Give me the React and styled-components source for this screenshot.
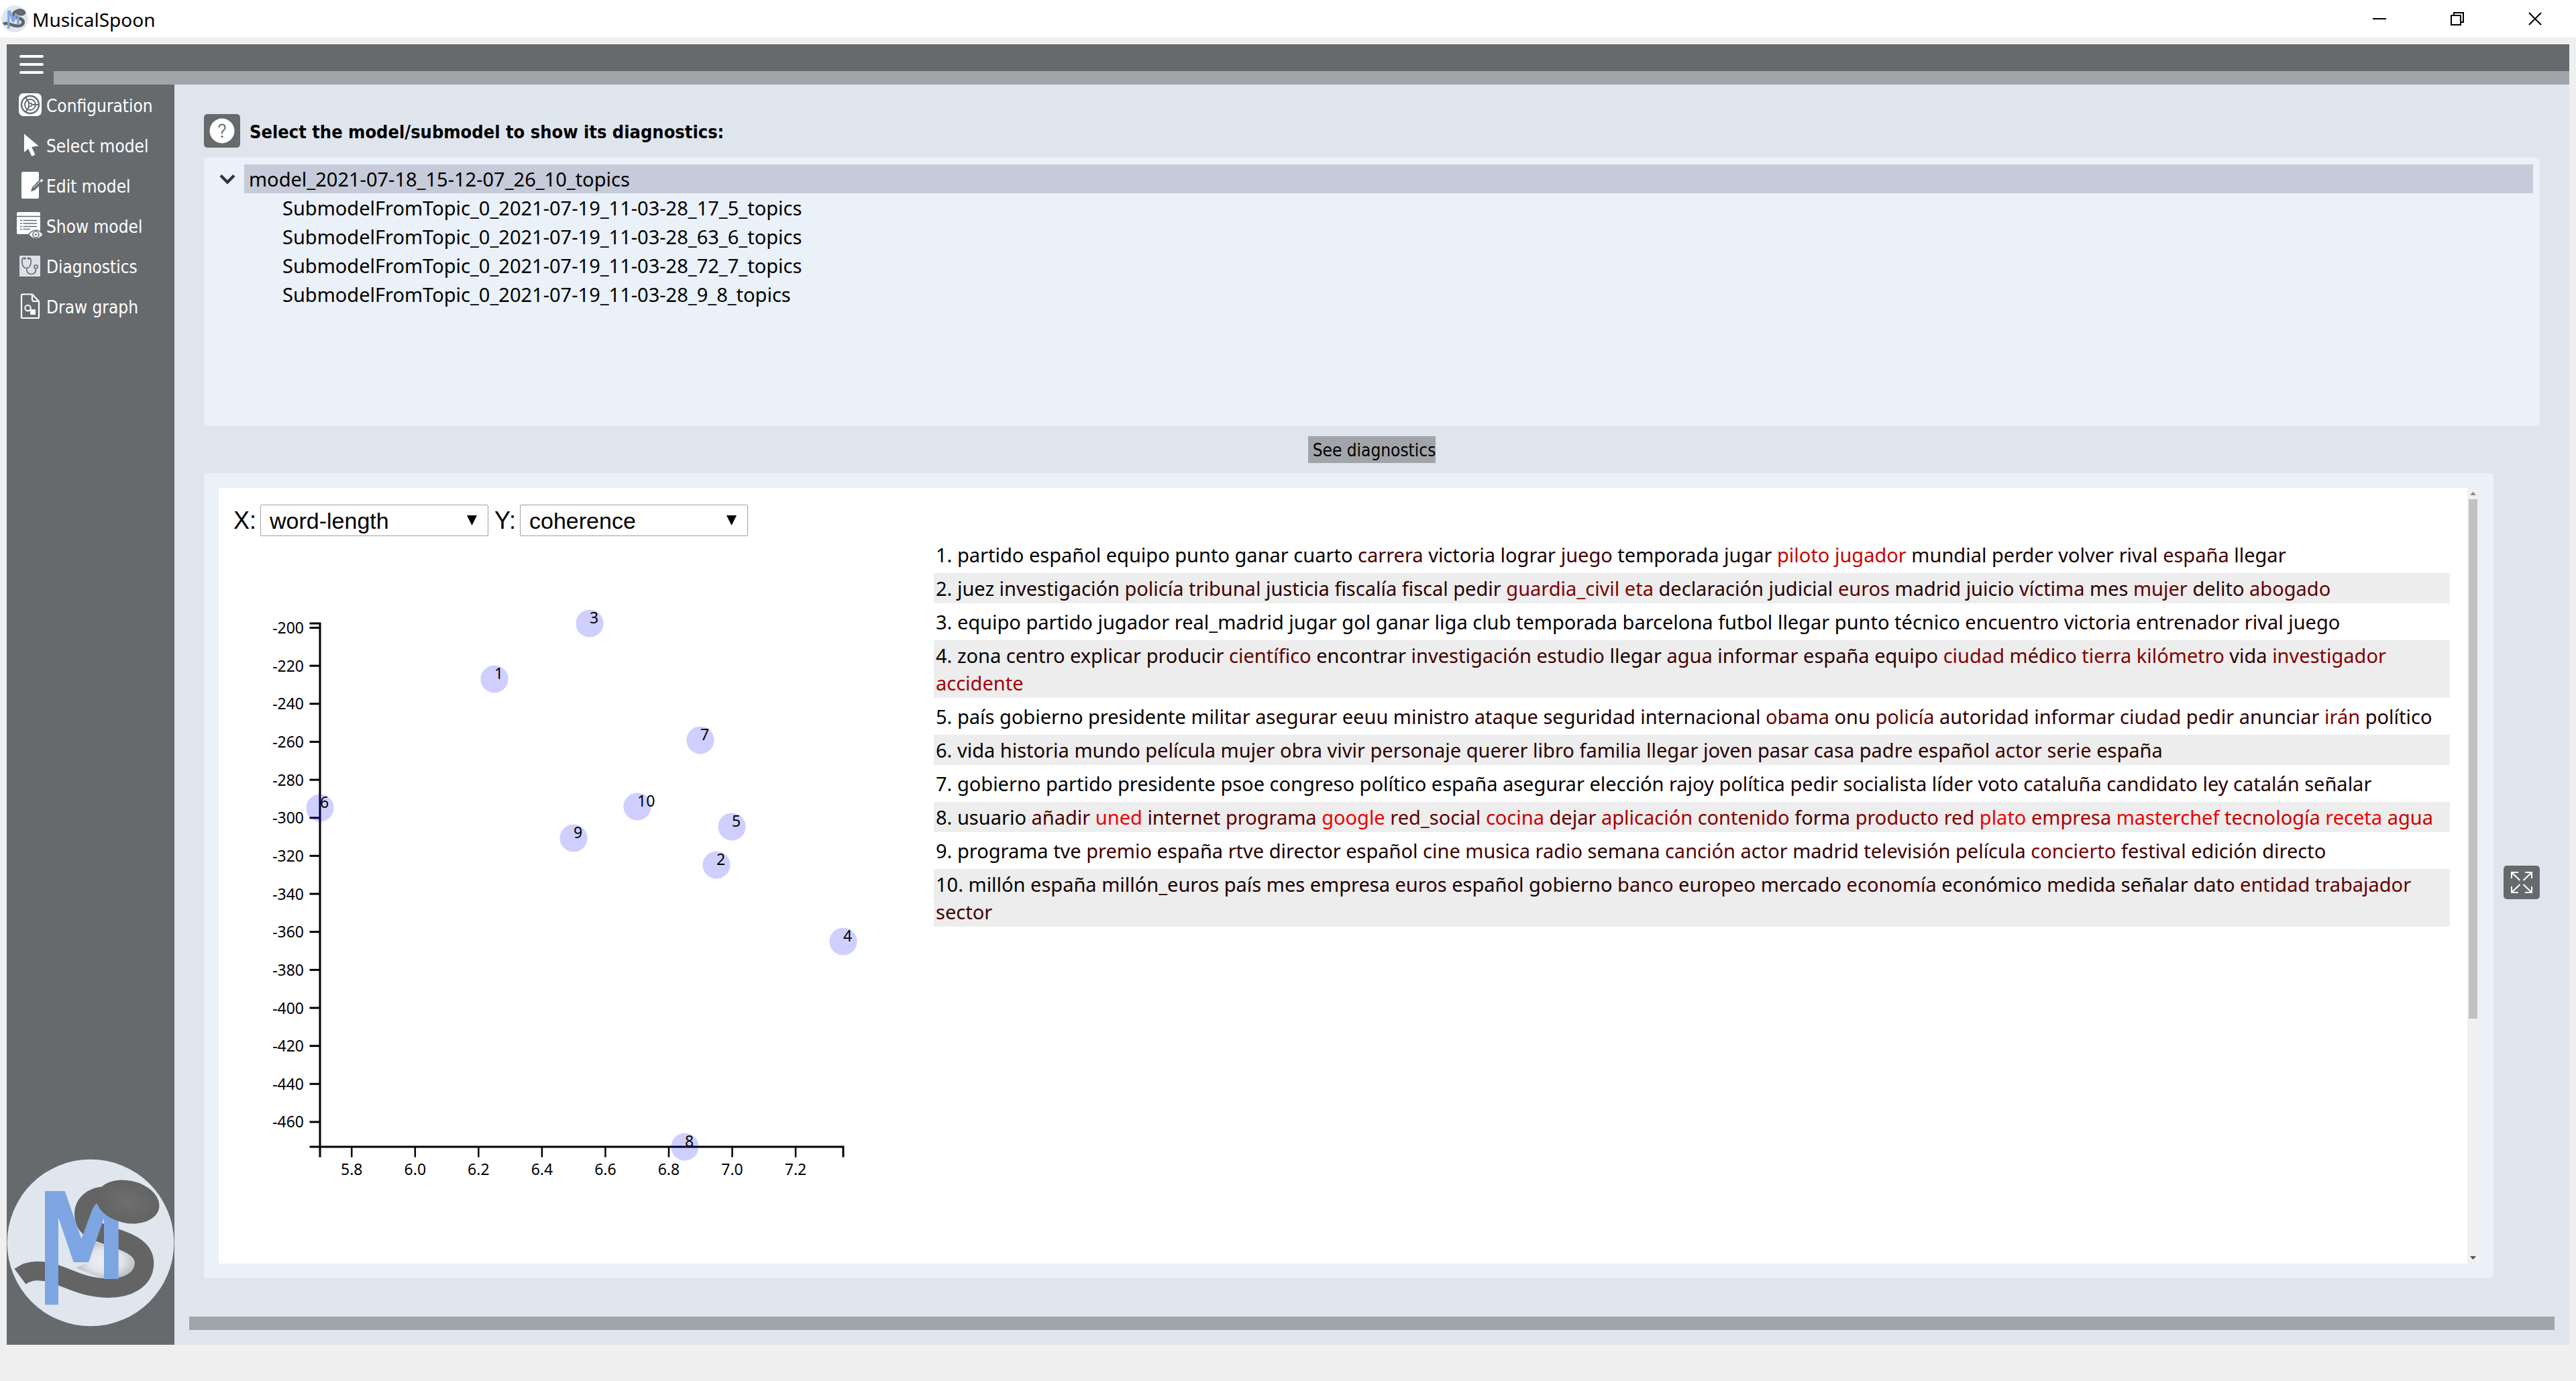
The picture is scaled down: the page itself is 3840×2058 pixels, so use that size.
import React from "react";
import styled, { createGlobalStyle } from "styled-components";

const color = {
  window: "#efefef",
  dark: "#666a6d",
  mid: "#a1a5aa",
  main: "#dfe5ed",
  panel: "#eaf1f9",
  selected: "#c6cbd9",
  row: "#ededed",
};

const uiFont = '"DejaVu Sans Condensed", "Noto Sans", sans-serif';
const textFont = '"Noto Sans", "Open Sans", sans-serif';
const formFont = '"Liberation Sans", Arial, sans-serif';

const GlobalStyle = createGlobalStyle`
  *, *::before, *::after { box-sizing: border-box; }
  body {
    margin: 0;
    background: ${color.window};
    color: #000;
    font-family: ${textFont};
  }
  button, select { margin: 0; padding: 0; border: 0; border-radius: 0; color: inherit; }
  ul, ol { margin: 0; padding: 0; list-style: none; }
  svg { display: block; flex: none; }
`;

const Page = styled.div`
  display: flex;
  flex-direction: column;
  min-height: 100vh;
`;

/* ---------- window title bar ---------- */

const TitleBar = styled.header`
  display: flex;
  align-items: center;
  gap: 6px;
  height: 56px;
  padding: 0 3px 0 2px;
  background: #fff;
`;

const Title = styled.h1`
  flex: 1;
  margin: 0;
  padding-top: 2px;
  font-size: 28px;
  font-weight: 400;
  line-height: 40px;
`;

const ControlGroup = styled.div`
  display: flex;
`;

const WindowButton = styled.button`
  display: flex;
  align-items: center;
  justify-content: center;
  width: 116px;
  height: 54px;
  background: transparent;
`;

/* ---------- frame ---------- */

const Frame = styled.div`
  flex: 1;
  display: flex;
  flex-direction: column;
  padding: 10px 10px 54px;
`;

const TopBar = styled.div`
  display: flex;
  height: 60px;
  background: ${color.dark};
`;

const MenuButton = styled.button`
  display: flex;
  flex-direction: column;
  justify-content: center;
  gap: 8px;
  width: 70px;
  padding: 0 15px 0 19px;
  background: transparent;
`;

const MenuLine = styled.span`
  height: 4px;
  border-radius: 2px;
  background: #fff;
`;

const TopStrip = styled.div`
  flex: 1;
  align-self: flex-end;
  height: 20px;
  background: ${color.mid};
`;

const Body = styled.div`
  flex: 1;
  display: flex;
`;

const Sidebar = styled.nav`
  display: flex;
  flex-direction: column;
  justify-content: space-between;
  width: 250px;
  padding-bottom: 27px;
  background: ${color.dark};
`;

const NavButton = styled.button`
  display: flex;
  align-items: center;
  gap: 4px;
  width: 100%;
  height: 60px;
  padding-left: 15px;
  background: transparent;
  color: #fff;
  font-family: ${uiFont};
  font-size: 26px;
  text-align: left;
`;

const NavLabel = styled.span`
  padding-top: 4px;
`;

const Main = styled.main`
  flex: 1;
  display: flex;
  flex-direction: column;
  min-width: 0;
  padding: 44px 22px 22px;
  background: ${color.main};
`;

const Content = styled.div`
  flex: 1;
  display: flex;
  flex-direction: column;
  gap: 15px;
  padding: 0 22px 57px;
`;

const BottomStrip = styled.div`
  height: 20px;
  background: ${color.mid};
`;

/* ---------- model selection ---------- */

const Prompt = styled.div`
  display: flex;
  align-items: center;
  gap: 14px;
`;

const IconButton = styled.button`
  flex: none;
  display: flex;
  align-items: center;
  justify-content: center;
  width: 54px;
  height: 50px;
  border-radius: 5px;
  background: ${color.dark};
`;

const PromptText = styled.h2`
  margin: 0;
  padding-top: 2px;
  font-family: ${uiFont};
  font-size: 27px;
  font-weight: 700;
`;

const Tree = styled.ul`
  height: 400px;
  padding: 10px;
  border-radius: 4px;
  background: ${color.panel};
`;

const TreeRow = styled.div`
  display: flex;
  height: 43px;
`;

const Toggle = styled.button`
  display: flex;
  align-items: center;
  justify-content: center;
  width: 50px;
  background: transparent;
`;

const TreeLabel = styled.span`
  flex: 1;
  margin-left: ${(p) => (p.$child ? "100px" : "0")};
  padding-left: 7px;
  background: ${(p) => (p.$selected ? color.selected : "transparent")};
  font-size: 29px;
  line-height: 43px;
`;

const ActionButton = styled.button`
  align-self: center;
  height: 40px;
  padding: 2px 0 0 7px;
  background: ${color.mid};
  font-family: ${uiFont};
  font-size: 26px;
`;

/* ---------- diagnostics ---------- */

const Results = styled.div`
  flex: 1;
  display: flex;
  align-items: center;
  gap: 15px;
`;

const Panel = styled.section`
  flex: 1;
  align-self: stretch;
  display: flex;
  min-width: 0;
  padding: 22px;
  border-radius: 5px;
  background: ${color.panel};
`;

const View = styled.div`
  flex: 1;
  display: flex;
  flex-direction: column;
  gap: 5px;
  min-width: 0;
  padding: 25px 26px 0 22px;
  background: #fff;
`;

const Controls = styled.div`
  display: flex;
  gap: 9px;
  font-family: ${formFont};
  font-size: 36px;
`;

const Field = styled.div`
  display: flex;
  align-items: center;
  gap: 6px;
`;

const SelectBox = styled.div`
  display: grid;
  align-items: center;
  width: 340px;

  > * { grid-area: 1 / 1; }
  > svg { justify-self: end; margin-right: 17px; pointer-events: none; }
`;

const Select = styled.select`
  appearance: none;
  width: 100%;
  height: 47px;
  padding-left: 13px;
  border: 1px solid #a0a0a0;
  border-radius: 2px;
  background: #fff;
  font-family: ${formFont};
  font-size: 34px;
`;

const Split = styled.div`
  display: flex;
  align-items: flex-start;
`;

const Chart = styled.svg`
  font-family: ${textFont};
  font-size: 23px;
`;

const Topics = styled.ol`
  flex: 1;
  display: flex;
  flex-direction: column;
  gap: 5px;
  min-width: 0;
`;

const Topic = styled.li`
  padding: 2px 3px;
  background: ${(p) => (p.$shaded ? color.row : "transparent")};
  font-size: 29px;
  line-height: 41px;
`;

const shades = ["#000", "#180000", "#2c0000", "#440000", "#600000", "#800000", "#a40000", "#c80000", "#ec0000"];

const Word = styled.span`
  color: ${(p) => shades[p.$level]};
`;

const ScrollTrack = styled.div`
  display: flex;
  flex-direction: column;
  align-items: center;
  width: 17px;
  background: #f0f0f0;
`;

const ScrollArrow = styled.span`
  display: flex;
  align-items: center;
  justify-content: center;
  width: 17px;
  height: 17px;
`;

const ScrollRail = styled.div`
  flex: 1;
  width: 13px;
`;

const ScrollThumb = styled.div`
  height: 69%;
  background: #c1c1c1;
`;

const Expand = styled(IconButton)`
  margin-top: 20px;
`;

/* ---------- drawings ---------- */

function Logo({ size, id }) {
  return (
    <svg width={size} height={size} viewBox="30 83 750 750" role="img" aria-label="MusicalSpoon logo">
      <defs>
        <radialGradient id={`${id}-bowl`}>
          <stop offset="0" stopColor="#6e6e6e" />
          <stop offset="1" stopColor="#636363" />
        </radialGradient>
        <radialGradient id={`${id}-glow`}>
          <stop offset="0" stopColor="#eceff3" />
          <stop offset="0.6" stopColor="#e2e5ea" />
          <stop offset="1" stopColor="#bfc2c6" />
        </radialGradient>
      </defs>
      <circle cx="405" cy="458" r="373" fill="#e0e6ee" />
      <path d="M425 455 C520 490 605 500 600 560 C590 620 500 625 450 615 L340 570 Q420 540 425 455Z" fill={`url(#${id}-glow)`} />
      <path
        d="M480 250 C410 246 376 290 376 330 C378 405 440 405 505 434 C600 462 646 496 645 552 C642 625 570 661 485 661 C345 661 270 584 170 584 Q125 583 90 609"
        fill="none"
        stroke="#646464"
        strokeWidth="86"
      />
      <rect x="201" y="227" width="60" height="508" fill="#7da5e2" />
      <rect x="465" y="320" width="65" height="300" fill="#7da5e2" />
      <polygon points="230,227 290,227 364,440 414,306 430,282 470,320 466,345 396,545 329,545 261,345" fill="#7da5e2" />
      <ellipse cx="571" cy="275" rx="143" ry="95" transform="rotate(12 571 275)" fill={`url(#${id}-bowl)`} />
    </svg>
  );
}

const icons = {
  configuration: (
    <>
      <rect x="3" y="3" width="34" height="34" rx="7" fill="#fff" />
      <g fill="none" stroke={color.dark}>
        <circle cx="20" cy="20" r="13" strokeWidth="2.4" />
        <circle cx="20" cy="20" r="8" strokeWidth="2" />
        <circle cx="20" cy="20" r="2.4" strokeWidth="1.6" fill="#fff" />
        <path d="M22.5 20H33M18.6 17.8L13.5 9M18.6 22.2L13.5 31" strokeWidth="2" />
      </g>
    </>
  ),
  select: <path d="M11 3.500V31l6-5.500 5.500 11.500 5-2.500-5.500-11.500 10.500-1.500z" fill="#fff" />,
  edit: (
    <>
      <rect x="7" y="0" width="26" height="40" rx="2" fill="#fff" />
      <path d="M22 28.500l1.500-5L35.500 11q2-1.500 3.500 0t0 3.500L26.500 27z" fill="#fff" stroke={color.dark} strokeWidth="1.4" />
      <path d="M22.500 28l1-4.500L34 13l3 3L26.500 26.500z" fill={color.dark} />
      <path d="M25 24L34.500 14.500" stroke="#fff" strokeWidth="1" />
    </>
  ),
  show: (
    <>
      <rect x="0" y="0" width="35" height="33" rx="2" fill="#fff" />
      <g stroke={color.dark} strokeWidth="1.6">
        <path d="M0 6.500H35" />
        <path d="M9.500 12.500H30M9.500 17H30M9.500 21.500H30M9.500 25.500H20" />
        <path d="M5 12.500H8M5 17H8M5 21.500H8M5 25.500H8" />
      </g>
      <path d="M17.500 33.500Q28.500 20.500 39.500 33.500Q28.500 46.500 17.500 33.500Z" fill="#fff" stroke={color.dark} strokeWidth="1.6" />
      <circle cx="28.500" cy="33.500" r="4.500" fill="none" stroke={color.dark} strokeWidth="1.6" />
      <circle cx="28.500" cy="33.500" r="1.600" fill={color.dark} />
    </>
  ),
  diagnostics: (
    <>
      <rect x="4" y="5" width="31" height="31" fill="#dcdfe4" />
      <g fill="none" stroke={color.dark} strokeWidth="1.6">
        <path d="M11.500 9H9Q8 9 8 11V16Q9 23.500 14.500 23.500T21 16V11Q21 9 20 9H17.500" />
        <path d="M14.500 23.500Q14.500 32.500 22 32.500Q29 32 28.500 24" />
        <circle cx="28.500" cy="21.500" r="2.500" />
      </g>
      <rect x="10" y="7.500" width="3.500" height="3" fill={color.dark} />
      <rect x="16" y="7.500" width="3.500" height="3" fill={color.dark} />
    </>
  ),
  draw: (
    <>
      <path d="M9 2.500H23L33 13V36.500Q33 38 31.500 38H8.500Q7 38 7 36.500V4Q7 2.500 9 2.500Z" fill="none" stroke="#fff" strokeWidth="2.2" />
      <path d="M23 2.500V10Q23 13 25.500 13H33" fill="none" stroke="#fff" strokeWidth="2.2" />
      <circle cx="16.500" cy="23" r="4.200" fill="none" stroke="#fff" strokeWidth="2" />
      <rect x="20" y="25" width="8" height="8" rx="1" fill="#fff" />
    </>
  ),
};

function WindowControls() {
  return (
    <ControlGroup>
      <WindowButton type="button" aria-label="Minimize">
        <svg width="20" height="20" viewBox="0 0 20 20" fill="none" stroke="#000" strokeWidth="2"><path d="M0 10H20" /></svg>
      </WindowButton>
      <WindowButton type="button" aria-label="Restore">
        <svg width="20" height="20" viewBox="0 0 20 20" fill="none" stroke="#000" strokeWidth="2"><path d="M1 5H15V19H1ZM5 5V1H19V15H15" /></svg>
      </WindowButton>
      <WindowButton type="button" aria-label="Close">
        <svg width="20" height="20" viewBox="0 0 20 20" fill="none" stroke="#000" strokeWidth="2"><path d="M1 1L19 19M19 1L1 19" /></svg>
      </WindowButton>
    </ControlGroup>
  );
}

function NavItem({ icon, children }) {
  return (
    <li>
      <NavButton type="button">
        <svg width="40" height="40" viewBox="0 0 40 40" aria-hidden="true">{icons[icon]}</svg>
        <NavLabel>{children}</NavLabel>
      </NavButton>
    </li>
  );
}

const submodels = [
  "SubmodelFromTopic_0_2021-07-19_11-03-28_17_5_topics",
  "SubmodelFromTopic_0_2021-07-19_11-03-28_63_6_topics",
  "SubmodelFromTopic_0_2021-07-19_11-03-28_72_7_topics",
  "SubmodelFromTopic_0_2021-07-19_11-03-28_9_8_topics",
];

/* each word may carry a redness level after an asterisk */
const topics = [
  "partido español equipo punto ganar cuarto carrera*3 victoria*1 lograr*1 juego*3 temporada jugar*1 piloto*7 jugador*7 mundial*1 perder*1 volver*1 rival*1 españa*3 llegar*1",
  "juez investigación*1 policía*3 tribunal*3 justicia*2 fiscalía*2 fiscal*2 pedir*2 guardia_civil*5 eta*5 declaración*2 judicial*2 euros*4 madrid*2 juicio*2 víctima*3 mes*2 mujer*4 delito*2 abogado*4",
  "equipo partido jugador real_madrid jugar gol ganar liga club temporada barcelona futbol llegar punto técnico encuentro*1 victoria*1 entrenador*1 rival*1 juego*1",
  "zona centro*1 explicar*1 producir*1 científico*4 encontrar*1 investigación*3 estudio*3 llegar*1 agua*3 informar*2 españa*2 equipo*2 ciudad*5 médico*4 tierra*5 kilómetro*5 vida*2 investigador*5 accidente*6",
  "país gobierno presidente militar*1 asegurar*1 eeuu*1 ministro*1 ataque*2 seguridad*1 internacional*1 obama*4 onu*2 policía*4 autoridad*2 informar*2 ciudad*3 pedir*2 anunciar*2 irán*5 político*1",
  "vida historia*1 mundo*1 película*2 mujer*2 obra*2 vivir*2 personaje*2 querer*2 libro*2 familia*2 llegar*2 joven*2 pasar*2 casa*2 padre*2 español*2 actor*3 serie*3 españa*2",
  "gobierno partido presidente psoe congreso político españa asegurar elección rajoy*1 política*1 pedir*1 socialista*1 líder*1 voto*1 cataluña*2 candidato*2 ley*2 catalán*2 señalar*1",
  "usuario añadir*3 uned*8 internet*3 programa*4 google*8 red_social*4 cocina*7 dejar*4 aplicación*6 contenido*5 forma*3 producto*5 red*5 plato*8 empresa*6 masterchef*8 tecnología*7 receta*8 agua*7",
  "programa tve*1 premio*3 españa*1 rtve*2 director*1 español*1 cine*3 musica*3 radio*3 semana*2 canción*4 actor*3 madrid*2 televisión*3 película*3 concierto*5 festival*3 edición*2 directo*2",
  "millón españa*1 millón_euros*1 país*1 mes*1 empresa*1 euros*2 español*1 gobierno*1 banco*3 europeo*2 mercado*2 economía*3 económico*1 medida*2 señalar*1 dato*2 entidad*4 trabajador*4 sector*3",
].map((line) =>
  line.split(" ").map((entry) => {
    const [text, level = 0] = entry.split("*");
    return { text, level: Number(level) };
  })
);

const points = [
  { id: 1, x: 389, y: 208 },
  { id: 2, x: 720, y: 485 },
  { id: 3, x: 531, y: 125 },
  { id: 4, x: 909, y: 599 },
  { id: 5, x: 743, y: 428 },
  { id: 6, x: 129, y: 400 },
  { id: 7, x: 696, y: 299 },
  { id: 8, x: 673, y: 905 },
  { id: 9, x: 507, y: 445 },
  { id: 10, x: 602, y: 398 },
];

const yTicks = Array.from({ length: 14 }, (_, i) => -200 - i * 20);
const xTicks = [5.8, 6, 6.2, 6.4, 6.6, 6.8, 7, 7.2];
const scaleX = (v) => 129 + (v - 5.7) * 472.7;
const scaleY = (v) => 131.5 + (-200 - v) * 2.8325;

function ScatterPlot() {
  return (
    <Chart width="1044" height="1000" viewBox="0 0 1044 1000" role="img" aria-label="Topics by word-length and coherence">
      <g fill="none" stroke="#000" strokeWidth="3">
        <path d="M113.500 125H129V905H113.500" />
        <path d="M129 920.500V905H909V920.500" />
        {yTicks.map((v) => <path key={v} d={`M113.500 ${scaleY(v)}H129`} />)}
        {xTicks.map((v) => <path key={v} d={`M${scaleX(v)} 905V920.500`} strokeWidth="2.5" />)}
      </g>
      {yTicks.map((v) => <text key={v} x="105" y={scaleY(v) + 8.5} textAnchor="end">{v}</text>)}
      {xTicks.map((v) => <text key={v} x={scaleX(v)} y="947" textAnchor="middle">{v.toFixed(1)}</text>)}
      {points.map((p) => (
        <g key={p.id}>
          <circle cx={p.x} cy={p.y} r="20.600" fill="#00f" fillOpacity="0.19" />
          <text x={p.x} y={p.y}>{p.id}</text>
        </g>
      ))}
    </Chart>
  );
}

function AxisSelect({ id, label, value }) {
  return (
    <Field>
      <label htmlFor={id}>{label}</label>
      <SelectBox>
        <Select id={id} defaultValue={value}>
          <option value={value}>{value}</option>
        </Select>
        <svg width="15" height="15" viewBox="0 0 15 15" aria-hidden="true"><path d="M0 0H15L7.500 15z" /></svg>
      </SelectBox>
    </Field>
  );
}

export default function App() {
  return (
    <Page>
      <GlobalStyle />
      <TitleBar>
        <Logo size={40} id="small" />
        <Title>MusicalSpoon</Title>
        <WindowControls />
      </TitleBar>
      <Frame>
        <TopBar>
          <MenuButton type="button" aria-label="Menu"><MenuLine /><MenuLine /><MenuLine /></MenuButton>
          <TopStrip />
        </TopBar>
        <Body>
          <Sidebar>
            <ul>
              <NavItem icon="configuration">Configuration</NavItem>
              <NavItem icon="select">Select model</NavItem>
              <NavItem icon="edit">Edit model</NavItem>
              <NavItem icon="show">Show model</NavItem>
              <NavItem icon="diagnostics">Diagnostics</NavItem>
              <NavItem icon="draw">Draw graph</NavItem>
            </ul>
            <Logo size={250} id="large" />
          </Sidebar>
          <Main>
            <Content>
              <Prompt>
                <IconButton type="button" aria-label="Help">
                  <svg width="38" height="38" viewBox="0 0 38 38" aria-hidden="true">
                    <circle cx="19" cy="19" r="18.500" fill="#fff" />
                    <path d="M14.500 14Q14.500 9.500 19 9.500T23.500 14Q23.500 16.500 21 18.500T19 23.500" fill="none" stroke={color.dark} strokeWidth="2" />
                    <circle cx="19" cy="27.500" r="1.600" fill={color.dark} />
                  </svg>
                </IconButton>
                <PromptText>Select the model/submodel to show its diagnostics:</PromptText>
              </Prompt>
              <Tree>
                <li>
                  <TreeRow>
                    <Toggle type="button" aria-label="Collapse">
                      <svg width="24" height="16" viewBox="0 0 24 16" aria-hidden="true">
                        <path d="M2 2.500L12 12.500L22 2.500" fill="none" stroke="#33383b" strokeWidth="4.500" />
                      </svg>
                    </Toggle>
                    <TreeLabel $selected>model_2021-07-18_15-12-07_26_10_topics</TreeLabel>
                  </TreeRow>
                  <ul>
                    {submodels.map((name) => (
                      <li key={name}><TreeRow><TreeLabel $child>{name}</TreeLabel></TreeRow></li>
                    ))}
                  </ul>
                </li>
              </Tree>
              <ActionButton type="button">See diagnostics</ActionButton>
              <Results>
                <Panel>
                  <View>
                    <Controls>
                      <AxisSelect id="x-axis" label="X:" value="word-length" />
                      <AxisSelect id="y-axis" label="Y:" value="coherence" />
                    </Controls>
                    <Split>
                      <ScatterPlot />
                      <Topics>
                        {topics.map((words, i) => (
                          <Topic key={i} $shaded={i % 2 === 1}>
                            {i + 1}.
                            {words.map((w, j) => (
                              <React.Fragment key={j}> <Word $level={w.level}>{w.text}</Word></React.Fragment>
                            ))}
                          </Topic>
                        ))}
                      </Topics>
                    </Split>
                  </View>
                  <ScrollTrack aria-hidden="true">
                    <ScrollArrow><svg width="9" height="5" viewBox="0 0 9 5"><path d="M0 5L4.500 0L9 5z" fill="#8a8a8a" /></svg></ScrollArrow>
                    <ScrollRail><ScrollThumb /></ScrollRail>
                    <ScrollArrow><svg width="9" height="5" viewBox="0 0 9 5"><path d="M0 0L4.500 5L9 0z" fill="#505050" /></svg></ScrollArrow>
                  </ScrollTrack>
                </Panel>
                <Expand type="button" aria-label="Expand">
                  <svg width="34" height="34" viewBox="0 0 34 34" fill="none" stroke="#fff" strokeWidth="2" aria-hidden="true">
                    <path d="M2 11V2H12M2 2L14.500 14M22 2H32V11M32 2L19.500 14M2 23V32H12M2 32L14.500 20M22 32H32V23M32 32L19.500 20" />
                  </svg>
                </Expand>
              </Results>
            </Content>
            <BottomStrip />
          </Main>
        </Body>
      </Frame>
    </Page>
  );
}
